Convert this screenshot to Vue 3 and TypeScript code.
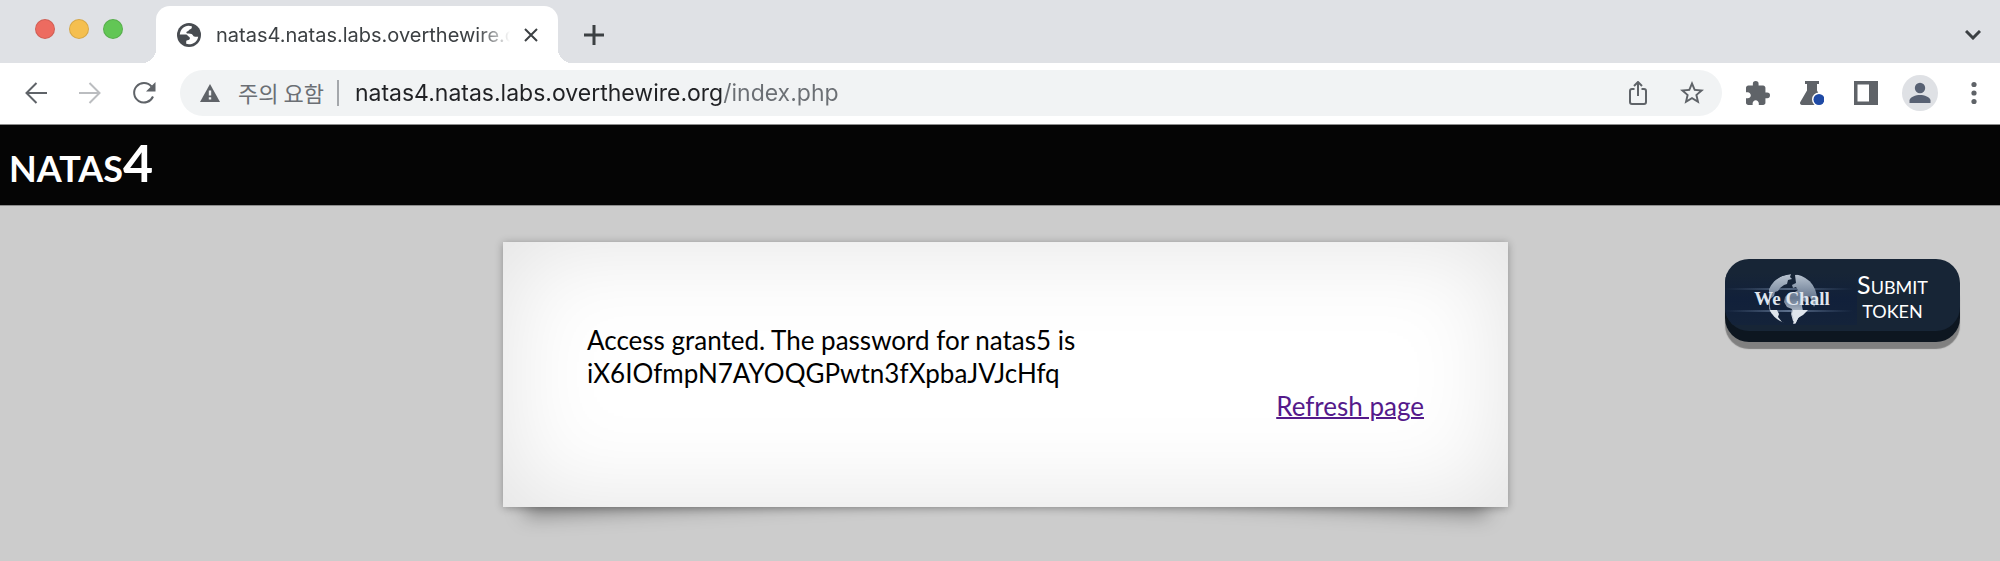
<script setup lang="ts">
import { ref } from 'vue'

const host = 'natas4.natas.labs.overthewire.org'
const tabTitle = 'natas4.natas.labs.overthewire.org'
const address = ref(`${host}/index.php`)
const level = 4
const password = 'iX6IOfmpN7AYOQGPwtn3fXpbaJVJcHfq'
const lights = ['red', 'amber', 'green']
</script>

<template>
  <div class="window">
    <header class="chrome">
      <div class="strip">
        <div class="lights">
          <span v-for="c in lights" :key="c" class="light" :class="c"></span>
        </div>
        <div class="tab">
          <svg class="globe" viewBox="0 0 24 24" aria-hidden="true">
            <circle cx="12" cy="12" r="12" fill="#484c51" />
            <path
              d="M2.800 11.500C3.300 6.500 7 3 11.500 2.800l3.300.4c.4 1.800-.6 2.800-2 3.200-.9.2-1 1.500-2.200 1.800-1.600.3-1.600 1.900-.4 2.200 2.200.1 4.300-.2 5.300 1.300.7 1.100 1.300 2 2.700 2h3c-.6 4.300-4.400 7.600-9.200 7.600-1 0-2-.2-2.800-.5v-2.300c.1-1.300 1.200-1.300 2.300-1.500 1.500-.3 1.900-2 .8-3-.6-.7-1.400-.6-1.700-1.500-.4-1.100-1.500-1-2.600-1z"
              fill="#fff"
            />
          </svg>
          <span class="tab-title">{{ tabTitle }}</span>
          <button class="plain close" type="button" aria-label="Close tab">
            <svg viewBox="0 0 14 14" aria-hidden="true"><path d="M1 1l12 12M13 1L1 13" /></svg>
          </button>
        </div>
        <button class="plain new-tab" type="button" aria-label="New tab">
          <svg viewBox="0 0 20 20" aria-hidden="true"><path d="M10 0v20M0 10h20" /></svg>
        </button>
        <button class="plain tab-search" type="button" aria-label="Search tabs">
          <svg viewBox="0 0 16 10" aria-hidden="true"><path d="M1 1l7 7 7-7" /></svg>
        </button>
      </div>

      <div class="toolbar">
        <button class="plain tool" type="button" aria-label="Back">
          <svg viewBox="0 0 24 24" aria-hidden="true"><path class="line" d="M23 12H3M12.500 2L2.500 12l10 10" /></svg>
        </button>
        <button class="plain tool dim" type="button" aria-label="Forward">
          <svg viewBox="0 0 24 24" aria-hidden="true"><path class="line" d="M1 12h20M11.500 2l10 10-10 10" /></svg>
        </button>
        <button class="plain tool" type="button" aria-label="Reload">
          <svg viewBox="0 0 24 24" aria-hidden="true">
            <path class="line" d="M19.500 5.500A9.800 9.800 0 1 0 21 15.500" />
            <path d="M23.500 1v9.500H14z" />
          </svg>
        </button>

        <div class="omnibox">
          <svg class="warn" viewBox="0 0 20 18" aria-hidden="true">
            <path d="M10 0l10 18H0z" fill="#5f6368" />
            <path d="M8.800 6.500h2.400v5H8.800zM8.800 13.200h2.400v2.400H8.800z" fill="#f1f3f4" />
          </svg>
          <label class="notice" for="address">주의 요함</label>
          <span class="rule"></span>
          <input id="address" v-model="address" class="address" type="text" spellcheck="false" />
          <button class="plain tool" type="button" aria-label="Share">
            <svg viewBox="0 0 24 24" aria-hidden="true">
              <path class="line" d="M8.500 8H6a2 2 0 0 0-2 2v11a2 2 0 0 0 2 2h12a2 2 0 0 0 2-2V10a2 2 0 0 0-2-2h-2.500M12 15V1.500M8 5l4-4 4 4" />
            </svg>
          </button>
          <button class="plain tool" type="button" aria-label="Bookmark">
            <svg viewBox="2 2 20 20" aria-hidden="true">
              <path d="M22 9.240l-7.190-.62L12 2 9.190 8.630 2 9.240l5.460 4.730L5.820 21 12 17.270 18.180 21l-1.630-7.030L22 9.240zM12 15.400l-3.760 2.270 1-4.280-3.320-2.880 4.380-.38L12 6.100l1.710 4.040 4.380.38-3.320 2.880 1 4.280L12 15.400z" />
            </svg>
          </button>
        </div>

        <button class="plain tool" type="button" aria-label="Extensions">
          <svg viewBox="2 1 21 21" aria-hidden="true">
            <path d="M20.500 11H19V7c0-1.100-.9-2-2-2h-4V3.500a2.500 2.500 0 0 0-5 0V5H4c-1.100 0-2 .9-2 2v3.800h1.500c1.490 0 2.700 1.210 2.700 2.700s-1.210 2.700-2.700 2.700H2V20c0 1.100.9 2 2 2h3.800v-1.500c0-1.490 1.210-2.700 2.700-2.700s2.700 1.210 2.700 2.700V22H17c1.100 0 2-.9 2-2v-4h1.500a2.500 2.500 0 0 0 0-5z" />
          </svg>
        </button>
        <button class="plain tool" type="button" aria-label="Experiments">
          <svg viewBox="0 0 24 24" aria-hidden="true">
            <path d="M5 0h14v3h-2v6.500l6 11.500a2 2 0 0 1-2 3H2a2 2 0 0 1-1.700-3L7 9.500V3H5z" />
            <circle cx="19" cy="18.500" r="7" fill="#fff" />
            <circle cx="19" cy="18.500" r="5.500" fill="#1f4aa5" />
          </svg>
        </button>
        <button class="plain tool" type="button" aria-label="Side panel">
          <svg viewBox="0 0 24 24" aria-hidden="true"><path fill-rule="evenodd" d="M0 0h24v24H0zM3.500 3.500v17H15v-17z" /></svg>
        </button>
        <button class="plain tool avatar" type="button" aria-label="Profile">
          <svg viewBox="0 0 24 24" aria-hidden="true">
            <circle cx="12" cy="7" r="5.200" />
            <path d="M1.500 22v-2.500C1.500 16 8 14 12 14s10.500 2 10.500 5.500V22z" />
          </svg>
        </button>
        <button class="plain tool" type="button" aria-label="Menu">
          <svg viewBox="0 0 24 24" aria-hidden="true">
            <circle cx="12" cy="3.500" r="2.600" /><circle cx="12" cy="12" r="2.600" /><circle cx="12" cy="20.500" r="2.600" />
          </svg>
        </button>
      </div>
    </header>

    <h1 class="banner">natas{{ level }}</h1>

    <main class="page">
      <section class="card">
        <p class="message">Access granted. The password for natas{{ level + 1 }} is<br />{{ password }}</p>
        <a class="refresh" href="index.php">Refresh page</a>
      </section>

      <button class="token" type="button">
        <svg class="logo" viewBox="0 0 132 52" role="img" aria-label="We Chall">
          <defs>
            <linearGradient id="band" x1="0" x2="0" y1="0" y2="1">
              <stop offset="0" stop-color="#172536" />
              <stop offset="0.5" stop-color="#11203a" />
              <stop offset="1" stop-color="#14233a" />
            </linearGradient>
            <linearGradient id="glow" x1="0" x2="1" y1="0" y2="0">
              <stop offset="0" stop-color="#6f88ad" stop-opacity="0" />
              <stop offset="0.5" stop-color="#8fa5c4" />
              <stop offset="1" stop-color="#6f88ad" stop-opacity="0" />
            </linearGradient>
            <linearGradient id="land" x1="0" x2="0" y1="0" y2="1">
              <stop offset="0" stop-color="#b9c4d1" />
              <stop offset="0.5" stop-color="#66778f" />
              <stop offset="1" stop-color="#dfe5ec" />
            </linearGradient>
            <clipPath id="disc"><circle cx="67" cy="26" r="25" /></clipPath>
          </defs>
          <rect width="132" height="52" fill="url(#band)" />
          <rect y="15" width="128" height="2" fill="url(#glow)" opacity="0.5" />
          <rect y="37" width="128" height="2" fill="url(#glow)" opacity="0.6" />
          <g clip-path="url(#disc)">
            <path fill="url(#land)" d="M44 14l6-7 7-4 9-2-1 3 2 2-4 1-1 4-3 1-4 3-2 3-3 1-1 4-4 3v8l1 5 3 7 5 6 6 4-4-1-12-12z" />
            <path fill="url(#land)" d="M70 2l8-1 9 7 5 10v9l-3 7-2-6-3-5-3 6-3-1-1 5 1 5-4 6-3 5-3-1-2-7 1-5-5-2-3-5 1-5 4-4 6-1 3-2-2-3-3 1-1-3 4-2z" />
            <path fill="#dfe5ec" d="M68 37h15l-5 5-5 3-3 7h-2l1-6-2-5zM43 37h9l2 4-1 3 4 5 5 3-9-1z" />
          </g>
          <text x="67" y="32" text-anchor="middle" class="logo-text">We Chall</text>
        </svg>
        <span class="token-label">Submit token</span>
      </button>
    </main>
  </div>
</template>

<style>
body {
  margin: 0;
  background: #ccc;
}
</style>

<style scoped>
.window {
  min-height: 100vh;
  background: #ccc;
  font-family: Lato, 'Noto Sans CJK KR', sans-serif;
}
.chrome {
  background: #fff;
  border-bottom: 1px solid #8c8c8c;
  font-family: Inter, 'Noto Sans CJK KR', sans-serif;
}
.plain {
  display: grid;
  place-items: center;
  padding: 0;
  border: 0;
  background: none;
  color: #3c4043;
}
.plain svg {
  display: block;
  fill: none;
  stroke: currentColor;
  stroke-width: 3;
}
.strip {
  display: flex;
  align-items: flex-end;
  height: 63px;
  background: #dfe1e5;
}
.lights {
  display: flex;
  align-items: center;
  align-self: flex-start;
  gap: 14px;
  height: 57px;
  padding: 0 33px 0 35px;
}
.light {
  box-sizing: border-box;
  width: 20px;
  height: 20px;
  border: 1px solid rgba(0, 0, 0, 0.12);
  border-radius: 50%;
}
.red {
  background: #ed6b60;
}
.amber {
  background: #f5bf4f;
}
.green {
  background: #62c655;
}
.tab {
  position: relative;
  box-sizing: border-box;
  display: flex;
  align-items: center;
  width: 402px;
  height: 57px;
  padding: 0 18px 0 21px;
  border-radius: 14px 14px 0 0;
  background: #fff;
}
.tab::before,
.tab::after {
  content: '';
  position: absolute;
  bottom: 0;
  width: 14px;
  height: 14px;
}
.tab::before {
  right: 100%;
  background: radial-gradient(circle at 0 0, transparent 14px, #fff 14px);
}
.tab::after {
  left: 100%;
  background: radial-gradient(circle at 100% 0, transparent 14px, #fff 14px);
}
.globe {
  flex: none;
  width: 24px;
  height: 24px;
}
.tab-title {
  flex: 1;
  overflow: hidden;
  margin: 0 12px 0 15px;
  color: #3c4043;
  font-size: 20px;
  line-height: 28px;
  white-space: nowrap;
  mask-image: linear-gradient(to right, #000 calc(100% - 32px), transparent);
}
.close {
  width: 18px;
  height: 24px;
}
.close svg {
  width: 14px;
  stroke-width: 2;
}
.new-tab {
  width: 40px;
  height: 57px;
  margin-left: 16px;
}
.new-tab svg {
  width: 20px;
}
.tab-search {
  width: 36px;
  height: 57px;
  margin: 0 9px 0 auto;
}
.tab-search svg {
  width: 16px;
}
.toolbar {
  display: flex;
  align-items: center;
  gap: 18px;
  height: 60px;
  padding: 0 8px 1px 18px;
}
.tool {
  flex: none;
  width: 36px;
  height: 36px;
  color: #5f6368;
}
.tool svg {
  width: 24px;
  height: 24px;
  fill: currentColor;
  stroke: none;
}
.tool .line {
  fill: none;
  stroke: currentColor;
  stroke-width: 2;
}
.dim {
  color: #bbbdc0;
}
.avatar {
  border-radius: 50%;
  background: #dfe1e5;
  color: #586173;
}
.omnibox {
  flex: 1;
  display: flex;
  align-items: center;
  gap: 18px;
  min-width: 0;
  height: 46px;
  padding: 0 12px 0 20px;
  border-radius: 23px;
  background: #f1f3f4;
}
.warn {
  flex: none;
  width: 20px;
  height: 18px;
}
.notice {
  flex: none;
  padding-bottom: 3px;
  color: #6b6f74;
  font-family: 'Noto Sans CJK KR', sans-serif;
  font-size: 22px;
  line-height: 28px;
}
.rule {
  flex: none;
  width: 2px;
  height: 26px;
  margin: 0 -2px 0 -5px;
  background: #a4a7ab;
}
.address {
  flex: 1;
  min-width: 0;
  padding: 0;
  border: 0;
  outline: 0;
  background: linear-gradient(to right, #202124 368px, #6b6f74 368px);
  background-clip: text;
  color: transparent;
  font: 23px / 32px Inter, sans-serif;
}
.banner {
  margin: 0;
  padding: 0 9px 6px;
  border-bottom: 1px solid #8c8c8c;
  background: #050505;
  color: #fff;
  font-size: 52px;
  font-weight: 700;
  font-variant: small-caps;
  line-height: 74px;
}
.page {
  position: relative;
  z-index: 0;
  display: grid;
  grid-template-columns: 503fr 1005fr 492fr;
  align-items: start;
  padding-top: 36px;
}
.card {
  position: relative;
  grid-column: 2;
  display: flex;
  flex-direction: column;
  padding: 82px 84px 84px;
  background: #fff;
  box-shadow: 0 1px 8px rgba(0, 0, 0, 0.3), inset 0 0 100px rgba(0, 0, 0, 0.12);
  color: #000;
  font-size: 26px;
  line-height: 33px;
}
.card::before,
.card::after {
  content: '';
  position: absolute;
  z-index: -1;
  bottom: 24px;
  width: 50%;
  height: 20%;
  box-shadow: 0 20px 20px rgba(0, 0, 0, 0.35);
}
.card::before {
  left: 20px;
  transform: rotate(-3deg);
}
.card::after {
  right: 20px;
  transform: rotate(3deg);
}
.message {
  margin: 0;
  overflow-wrap: anywhere;
}
.refresh {
  align-self: flex-end;
  color: #551a8b;
  text-decoration-thickness: 2px;
}
.token {
  grid-column: 3;
  justify-self: end;
  display: flex;
  align-items: center;
  width: 235px;
  height: 72px;
  margin: 17px 40px 0 0;
  padding: 8px 32px 0 0;
  overflow: hidden;
  border: 0;
  border-radius: 24px;
  background: #172536;
  box-shadow: 0 11px 0 #0d1620, 0 18px 1px #808080;
  color: #fff;
  font-family: inherit;
  font-size: 25px;
  font-variant: small-caps;
  line-height: 24px;
}
.logo {
  flex: none;
  width: 132px;
  height: 52px;
}
.logo-text {
  fill: #dfe5ee;
  font: bold 19px 'Liberation Serif', serif;
}
.token-label {
  flex: 1;
  padding-bottom: 6px;
  text-align: center;
}
</style>
